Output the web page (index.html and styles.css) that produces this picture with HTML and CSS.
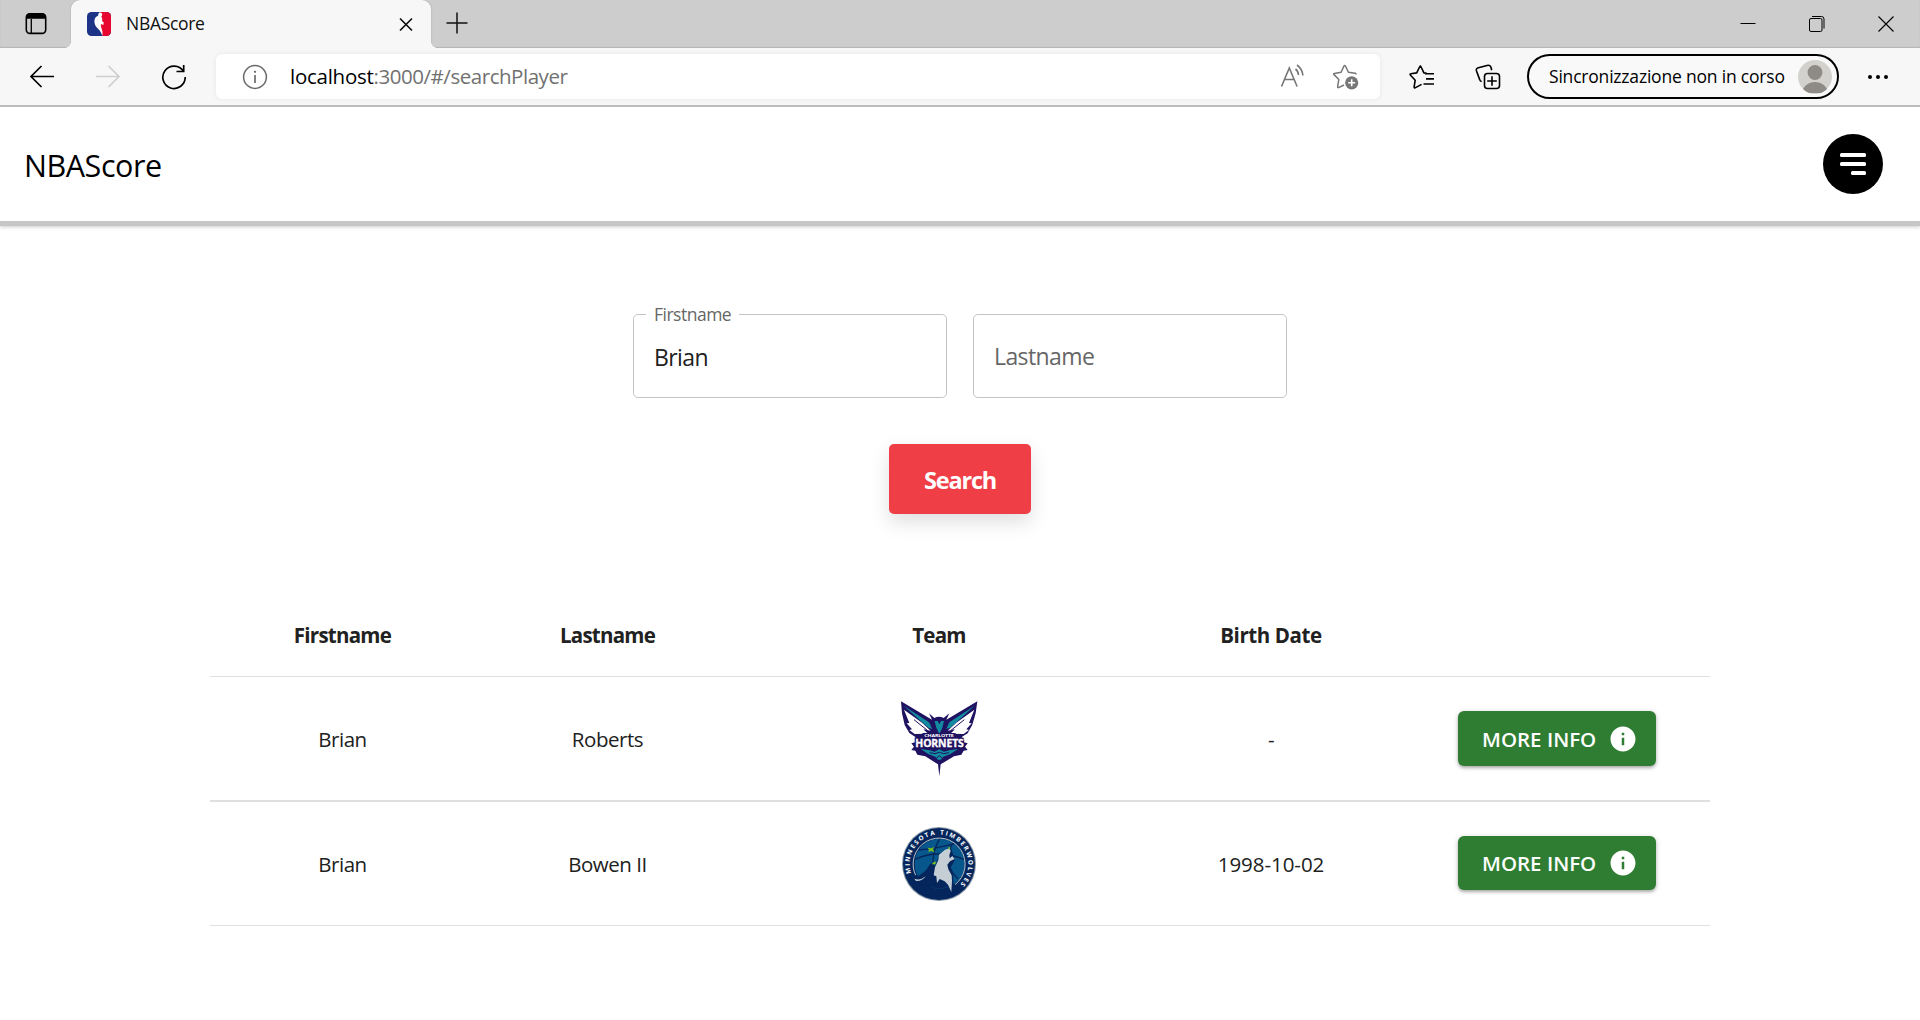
FILE: index.html
```html
<!DOCTYPE html>
<html lang="it">
<head>
<meta charset="utf-8">
<title>NBAScore</title>
<link rel="stylesheet" href="styles.css">
</head>
<body>
<div class="tabstrip">
  <div class="tab-actions">
    <svg width="24" height="24" viewBox="0 0 24 24" fill="none"><rect x="2.300" y="1.800" width="19.400" height="19.600" rx="3.600" stroke="#000" stroke-width="1.600"/><path d="M2 6.800V5a3.500 3.500 0 0 1 3.500-3.500h13A3.500 3.500 0 0 1 22 5v1.800z" fill="#000"/><path d="M7.300 7v14" stroke="#000" stroke-width="1.300"/></svg>
  </div>
  <div class="tab">
    <svg class="favicon" width="24" height="24" viewBox="0 0 24 24"><rect width="24" height="24" rx="4.500" fill="#1d3388"/><path d="M13 0h6.500A4.500 4.500 0 0 1 24 4.500v15a4.500 4.500 0 0 1-4.500 4.500H15.500L13 16z" fill="#e7062f"/><path d="M12.200.5c2-.4 3.300.6 3 2.300-.1 1.100-.4 1.700-1.200 2 1.400 1 1.500 2.300 1 4.200l1.800 1.500-.5 2.500-2.400-.9c-.4 3 1.200 5.200 1.500 7.400.2 1.500.1 3-.1 4.500-.7-3-2-5-4-7C8.800 15 7.300 12 7.400 9c.2-3 1.500-4.500 3.700-5.200.2-1.200.2-2.300 1.100-3.300z" fill="#fff"/></svg>
    <span class="tab-title">NBAScore</span>
    <svg class="tab-close" width="16" height="16" viewBox="0 0 16 16"><path d="M2 1.500l12 12M14 1.500l-12 12" stroke="#111" stroke-width="1.700"/></svg>
  </div>
  <svg class="new-tab" width="22" height="22" viewBox="0 0 22 22"><path d="M11 0.500v21M0.500 11h21" stroke="#111" stroke-width="1.500"/></svg>
  <div class="window-controls">
    <svg width="16" height="16" viewBox="0 0 16 16"><path d="M.5 7.500h15" stroke="#000"/></svg>
    <svg width="16" height="16" viewBox="0 0 16 16" fill="none" stroke="#000"><rect x=".5" y="2.500" width="12.500" height="13" rx="1.500"/><path d="M3 .5h9.500a2.500 2.500 0 0 1 2.500 2.500v9.500"/></svg>
    <svg width="16" height="16" viewBox="0 0 16 16"><path d="M.5.5l15 15M15.500.5l-15 15" stroke="#000" stroke-width="1.100"/></svg>
  </div>
</div>

<div class="toolbar">
  <div class="nav">
    <svg width="26" height="24" viewBox="0 0 26 24" fill="none" stroke="#000" stroke-width="1.700"><path d="M12.500 1L2 11.500 12.500 22M2 11.500h23"/></svg>
    <svg width="26" height="24" viewBox="0 0 26 24" fill="none" stroke="#cfcfcf" stroke-width="1.700"><path d="M12.500 1L23 11.500 12.500 22M23 11.500H0"/></svg>
    <svg class="reload" width="26" height="26" viewBox="0 0 26 26" fill="none" stroke="#000" stroke-width="1.700"><path d="M22.400 7.200A11.200 11.200 0 1 0 24.200 13"/><path d="M15.500 7.500h7.200V1"/></svg>
  </div>
  <div class="address">
    <svg width="26" height="26" viewBox="0 0 26 26"><circle cx="13" cy="13" r="11.400" fill="none" stroke="#6b6b6b" stroke-width="1.500"/><path d="M13 11v8" stroke="#6b6b6b" stroke-width="1.700"/><circle cx="13" cy="7.800" r="1.150" fill="#6b6b6b"/></svg>
    <span class="url"><span class="host">localhost</span>:3000/#/searchPlayer</span>
    <svg class="read-aloud" width="26" height="26" viewBox="0 0 26 26" fill="none" stroke="#767676" stroke-width="1.600"><path d="M1.500 22.500L9.300 4l7.800 18.500M4.500 15.500h9.700M15.500 5c1.900 1.500 2.900 3.500 3 6M17 1c3.500 2.500 5.400 6 5.900 10.500"/></svg>
    <svg class="add-star" width="28" height="28" viewBox="0 0 28 28" fill="none" stroke="#767676" stroke-width="1.500" stroke-linejoin="round"><path d="M12 22l-5.400 2.600a.8.800 0 0 1-1-.8l1.200-7.300-5-5.100a.6.600 0 0 1 .4-1l6.900-1.100 3-6.500a.7.700 0 0 1 1.200 0l3.100 6.500 6.800 1c.7.100.9.700.4 1.200"/><circle cx="19.700" cy="19.800" r="6.600" fill="#767676" stroke="none"/><path d="M19.700 16.300v7M16.200 19.800h7" stroke="#fff" stroke-width="1.600"/></svg>
  </div>
  <svg class="favorites" width="26" height="26" viewBox="0 0 26 26" fill="none" stroke="#000" stroke-width="1.600" stroke-linejoin="round"><path d="M17.700 9.300l-2.800-.4-3-6.400a.6.600 0 0 0-1.100 0L7.700 8.900l-6 .9a.7.700 0 0 0-.4 1.200l4.900 5.200-1.100 7a.7.700 0 0 0 1 .7l6.500-3.500M16 9.700h9M17 14.900h8M14.500 20h10.500"/></svg>
  <svg class="collections" width="26" height="26" viewBox="0 0 26 26" fill="none" stroke="#000" stroke-width="1.600"><rect x="9.500" y="9.500" width="15" height="15" rx="3"/><path d="M17 12.200v9.600M12.200 17h9.600M6.700 17.500c-1-.2-1.700-.8-2-1.900L1.400 6.800c-.3-1.100 0-2.100 1.100-2.700L12 1.500c1.900-.5 3.300.2 3.900 1.600l.8 3.200"/></svg>
  <div class="profile">
    <span>Sincronizzazione non in corso</span>
    <svg width="34" height="34" viewBox="0 0 34 34"><defs><clipPath id="av"><circle cx="17" cy="17" r="17"/></clipPath></defs><g clip-path="url(#av)"><rect width="34" height="34" fill="#d3d1ce"/><circle cx="17" cy="12.500" r="7.400" fill="#8e8a86"/><path d="M4 33c1-7.500 7-11 13-11s12 3.500 13 11z" fill="#8e8a86"/></g></svg>
  </div>
  <svg class="more" width="22" height="6" viewBox="0 0 22 6"><circle cx="3" cy="3" r="2"/><circle cx="11" cy="3" r="2"/><circle cx="19" cy="3" r="2"/></svg>
</div>

<header class="app-header">
  <span class="brand">NBAScore</span>
  <button class="menu-button" aria-label="Menu"><svg width="26" height="22" viewBox="0 0 26 22" fill="#fff"><rect width="26" height="4" rx="1.500"/><rect y="9" width="26" height="4" rx="1.500"/><rect x="11" y="18" width="15" height="4" rx="1.500"/></svg></button>
</header>

<main>
  <form class="search">
    <div class="fields">
      <div class="field"><label>Firstname</label><span class="value">Brian</span></div>
      <div class="field"><span class="placeholder">Lastname</span></div>
    </div>
    <button class="search-button" type="button">Search</button>
  </form>

  <table class="players">
    <colgroup><col class="c-name"><col class="c-name"><col class="c-team"><col class="c-date"><col class="c-action"></colgroup>
    <thead><tr><th>Firstname</th><th>Lastname</th><th>Team</th><th class="birth">Birth Date</th><th></th></tr></thead>
    <tbody>
      <tr>
        <td>Brian</td><td>Roberts</td>
        <td>
          <svg class="logo" width="78" height="78" viewBox="30 29 234 234">
            <path d="M33 33L112 80l14 8-9-19 16 14q14-8 28 0l17-14-9 19 14-8L262 33l-5 36-10 34-14 26-18 11 8 8-1 8 11 3-8 10 8 10-12 2-7 12-22 5-40 24-4 36-4-36-38-24-24-5-6-12-12-2 8-10-8-10 12-3v-16l-18-12-14-24-8-35z" fill="#1f1260"/>
            <path d="M41 46l76 50 10 20-12-4z" fill="#128ba0"/><path d="M254 46l-76 50-9 20 12-4z" fill="#128ba0"/>
            <path d="M42 58l54 39 26 24-22-4 14 13-40 1-16-12 8-2-16-18 8-1z" fill="#fff"/>
            <path d="M253 58l-54 39-26 24 22-4-14 13 40 1 16-12-8-2 16-18-8-1z" fill="#fff"/>
            <path d="M72 88l40 32M223 88l-40 32" stroke="#1f1260" stroke-width="3"/>
            <path d="M134 92h9l5 10 5-10h9l-5 20-9 19-9-19zM92 176l27 4 15 4 14-7 14 7 16-4 26-4-24 16-20 7-7 9h-10l-7-9-20-7z" fill="#128ba0"/>
            <path d="M98 128h98l8 14h17v33H74v-33h17z" fill="#1f1260"/>
            <path d="M119 187l16 3 13-4 13 4 16-3M138 205l10-9 10 9" fill="none" stroke="#1f1260" stroke-width="3"/>
            <text class="hornets-city" x="103" y="139" textLength="88" lengthAdjust="spacingAndGlyphs">CHARLOTTE</text>
            <text class="hornets-name" x="76" y="171" textLength="145" lengthAdjust="spacingAndGlyphs">HORNETS</text>
          </svg>
        </td>
        <td>-</td>
        <td><button class="info-button">MORE INFO<svg width="30" height="30" viewBox="0 0 24 24"><path d="M12 2C6.480 2 2 6.480 2 12s4.480 10 10 10 10-4.480 10-10S17.520 2 12 2zm1 15h-2v-6h2v6zm0-8h-2V7h2v2z" fill="#fff"/></svg></button></td>
      </tr>
      <tr>
        <td>Brian</td><td>Bowen II</td>
        <td>
          <svg class="logo" width="76" height="76" viewBox="34 30 228 228">
            <defs><path id="ring" d="M64.300 171.200A88 88 0 1 1 210.200 206.200"/></defs>
            <circle cx="148" cy="144" r="111" fill="#8998a8"/><circle cx="148" cy="144" r="108" fill="#04265c"/>
            <circle cx="150" cy="143" r="75" fill="#07568c"/>
            <g fill="none" stroke="#04265c" stroke-width="4"><path d="M76 130q70-32 146 0M150 68q-36 60-8 140M84 102q60-4 112-20M190 80q-34 60 14 108"/></g>
            <path d="M78 178A78 78 0 1 1 196 206" fill="none" stroke="#b9c5cf" stroke-width="3"/>
            <path d="M60 176l26 4 22-16 16-24 12 10 12-30 36-24 12 36-14 24 8 20 2 34-44 8-50-10-30-14z" fill="#04265c"/>
            <path d="M180 97l-14 4-18 15-2 16-10 22-4 24 8 3 2 20 8-12 15 7 10 10 10 22 2-34-1-16-10-18-3-14 8-10 14-7-7-9-8 7-1-10 4-12z" fill="#c5ced5"/>
            <path d="M74 188q18 7 34-7-10 15-29 14z" fill="#c5ced5"/>
            <path d="M114 95l9 2 10-4-3 8 5 8-10-4-9 3 2-6zM126 145l7-8h6l-2 8zM174 95l8-2-2 8z" fill="#78be21"/>
            <text class="wolves-name"><textPath href="#ring" textLength="370">MINNESOTA TIMBERWOLVES</textPath></text>
          </svg>
        </td>
        <td class="date">1998-10-02</td>
        <td><button class="info-button second">MORE INFO<svg width="30" height="30" viewBox="0 0 24 24"><path d="M12 2C6.480 2 2 6.480 2 12s4.480 10 10 10 10-4.480 10-10S17.520 2 12 2zm1 15h-2v-6h2v6zm0-8h-2V7h2v2z" fill="#fff"/></svg></button></td>
      </tr>
    </tbody>
  </table>
</main>
</body>
</html>
```
FILE: styles.css
```css
* { box-sizing: border-box; }
body {
  margin: 0;
  background: #fff;
  color: #212121;
  font-family: "Open Sans", "Noto Sans", sans-serif;
  overflow: hidden;
}
svg { display: block; flex: none; }
button { border: 0; font-family: inherit; padding: 0; }

/* Browser tab strip */
.tabstrip {
  display: flex;
  height: 48px;
  background: #cdcdcd;
  box-shadow: inset 0 -1px 1px #b4b4b4;
}
.tab-actions { width: 71px; padding: 12px 0 0 24px; }
.tab {
  position: relative;
  display: flex;
  align-items: center;
  width: 360px;
  padding: 0 17px 0 16px;
  background: #f7f7f7;
  border-radius: 9px 9px 0 0;
  box-shadow: 0 0 2px #a5a5a5;
  clip-path: inset(-3px -8px 0 -8px);
}
.tab::before,
.tab::after {
  content: "";
  position: absolute;
  bottom: 0;
  width: 6px;
  height: 6px;
}
.tab::before { left: -6px; background: radial-gradient(circle at 0 0, transparent 5.5px, #f7f7f7 6px); }
.tab::after { right: -6px; background: radial-gradient(circle at 100% 0, transparent 5.5px, #f7f7f7 6px); }
.tab-title {
  flex: 1;
  margin-left: 15px;
  color: #111;
  font-size: 17.5px;
  letter-spacing: -0.3px;
  line-height: 46px;
  padding-bottom: 2px;
}
.tab-close { margin-top: 1px; }
.new-tab { margin: 12px 0 0 15px; }
.window-controls { display: flex; gap: 53px; margin: 16px 26px 0 auto; }

/* Browser toolbar */
.toolbar {
  display: flex;
  align-items: center;
  height: 59px;
  padding-left: 29px;
  background: #f7f7f7;
  border-bottom: 2px solid #bdbdbd;
}
.nav { display: flex; align-items: center; gap: 41px; width: 187px; }
.reload { margin-left: -2px; }
.address {
  display: flex;
  align-items: center;
  width: 1164px;
  height: 45px;
  padding: 0 20px 0 26px;
  background: #fff;
  border-radius: 6px;
  box-shadow: 0 0 5px rgba(0, 0, 0, .07);
}
.url {
  flex: 1;
  margin-left: 22px;
  padding-bottom: 1px;
  color: #717171;
  font-size: 20.5px;
  letter-spacing: -0.46px;
  line-height: 44px;
}
.host { color: #000; letter-spacing: -0.26px; }
.add-star { margin-left: 26px; }
.favorites { margin-left: 29px; }
.collections { margin-left: 40px; }
.profile {
  display: flex;
  align-items: center;
  justify-content: space-between;
  width: 312px;
  height: 45px;
  margin-left: 26px;
  padding: 0 5px 0 20px;
  border: 2px solid #000;
  border-radius: 23px;
  background: #f9f9f9;
  color: #000;
  font-size: 17.5px;
  letter-spacing: -0.2px;
  white-space: nowrap;
}
.profile span { padding-bottom: 2px; }
.more { margin-left: 28px; }

/* Application header */
.app-header {
  display: flex;
  align-items: center;
  justify-content: space-between;
  height: 114px;
  padding: 0 37px 0 24px;
  background: #fff;
  box-shadow: 0 5px 1px #c6c6c6, 0 6px 4px #cfcfcf;
}
.brand { color: #000; font-size: 30.5px; letter-spacing: -0.45px; padding-top: 1px; }
.menu-button {
  display: grid;
  place-items: center;
  width: 60px;
  height: 60px;
  border-radius: 50%;
  background: #000;
}

/* Search form */
.search { display: flex; flex-direction: column; align-items: center; padding-top: 93px; }
.fields { display: flex; gap: 26px; }
.field {
  position: relative;
  width: 314px;
  height: 84px;
  padding: 0 20px;
  border: 1px solid #c4c4c4;
  border-radius: 5px;
  font-size: 23px;
  line-height: 83px;
  letter-spacing: -0.6px;
}
.field label {
  position: absolute;
  top: -15px;
  left: 12px;
  padding: 0 8px;
  background: #fff;
  color: #666;
  font-size: 17.5px;
  letter-spacing: -0.5px;
  line-height: 28px;
}
.value { color: #212121; position: relative; top: 1px; }
.placeholder { color: #666; letter-spacing: -0.6px; }
.search-button {
  width: 142px;
  height: 70px;
  margin-top: 46px;
  padding-top: 2px;
  border-radius: 5px;
  background: #ef3e46;
  box-shadow: 0 8px 20px rgba(0, 0, 0, .13);
  color: #fff;
  font-size: 23.5px;
  font-weight: 700;
  letter-spacing: -1.2px;
}

/* Results */
.players {
  width: 1500px;
  margin: 80px auto 0;
  border-spacing: 0;
  table-layout: fixed;
  font-size: 20.5px;
  text-align: center;
}
.c-name { width: 265px; }
.c-team { width: 398px; }
.c-date { width: 266px; }
.c-action { width: 306px; }
.players th, .players td { padding: 0; border-bottom: 1px solid #e0e0e0; vertical-align: middle; }
.players th { height: 83px; font-weight: 700; letter-spacing: -0.75px; }
.players .birth { letter-spacing: -0.4px; }
.players td { height: 124px; padding-top: 1px; letter-spacing: -0.45px; }
.players tbody tr:first-child td { height: 125px; border-bottom-width: 2px; }
.players .date { letter-spacing: -0.05px; }
.players td:has(svg) { padding-top: 0; }
.logo { margin: 0 auto; }
.hornets-city { fill: #fff; font: 700 11px "Open Sans", sans-serif; }
.hornets-name {
  fill: #fff;
  stroke: #fff;
  stroke-width: 1px;
  font: 700 34px "Open Sans", sans-serif;
}
.wolves-name { fill: #fff; font: 700 19px "Open Sans", sans-serif; }
.info-button {
  display: flex;
  align-items: center;
  justify-content: space-between;
  width: 198px;
  height: 55px;
  margin: 0 auto;
  padding: 0 18px 0 24px;
  border-radius: 6px;
  background: #2e7d32;
  box-shadow: 0 2px 3px rgba(0, 0, 0, .25), 0 1px 6px rgba(0, 0, 0, .14);
  color: #fff;
  font-size: 20.5px;
  font-weight: 600;
  letter-spacing: 0;
  white-space: nowrap;
}
.info-button.second { height: 54px; margin-bottom: 1px; }
```
